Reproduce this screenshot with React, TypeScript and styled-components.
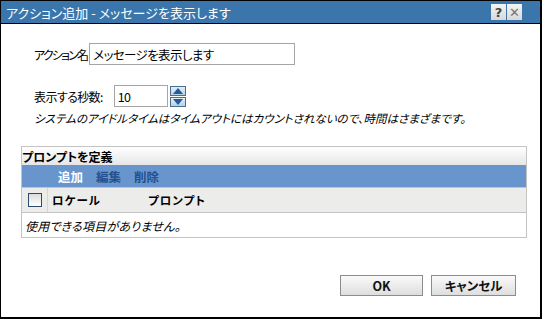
import React from "react";
import styled, {createGlobalStyle} from "styled-components";

const GlobalStyle = createGlobalStyle`
  html, body {
    margin: 0;
    padding: 0;
    background: #ffffff;
  }
  body {
    font-family: "Noto Sans CJK JP", "DejaVu Sans", sans-serif;
    font-size: 12px;
    font-feature-settings: "palt";
    color: #000;
  }
`;

const Window = styled.div`
  width: 542px;
  height: 319px;
  box-sizing: border-box;
  border: 1px solid #000;
  border-right-width: 2px;
  border-bottom-width: 2px;
  display: flex;
  flex-direction: column;
  background: #fff;
`;

const TitleBar = styled.div`
  height: 22px;
  background: #3a75ab;
  border-bottom: 1px solid #000;
  display: flex;
  align-items: center;
  padding: 0 18px 0 5px;
  color: #fff;
  font-size: 13px;
  letter-spacing: 0px;
`;

const Title = styled.div`
  flex: 1;
`;

const TitleButton = styled.div<{dim?: boolean}>`
  width: 15px;
  height: 16px;
  margin-left: 1px;
  background: linear-gradient(#f4f4f4, #d8d8d8);
  color: ${(p) => (p.dim ? "#777" : "#444")};
  display: flex;
  align-items: center;
  justify-content: center;
  font-family: "DejaVu Sans", sans-serif;
  font-weight: bold;
  font-size: 13px;
`;

const Body = styled.div`
  flex: 1;
  display: flex;
  flex-direction: column;
  padding: 19px 15px 0 19px;
`;

const Row = styled.div<{top?: number}>`
  display: flex;
  align-items: center;
  margin-top: ${(p) => p.top ?? 0}px;
  padding-left: 14px;
`;

const Label = styled.span<{gap?: number; spacing?: number}>`
  margin-right: ${(p) => p.gap ?? 2}px;
  letter-spacing: ${(p) => p.spacing ?? 0}px;
`;

const TextInput = styled.div<{w: number}>`
  width: ${(p) => p.w}px;
  height: 22px;
  box-sizing: border-box;
  border: 1px solid #a5a5a5;
  display: flex;
  align-items: center;
  padding-left: 3px;
  font-size: 12.5px;
  letter-spacing: -0.6px;
`;

const Spinner = styled.div`
  display: flex;
  flex-direction: column;
  gap: 1px;
  margin-left: 2px;
`;

const SpinButton = styled.div`
  width: 16px;
  height: 10px;
  box-sizing: border-box;
  border: 1px solid #4a6f8e;
  background: linear-gradient(#e4eef6, #b9cfe2);
  display: flex;
  align-items: center;
  justify-content: center;
`;

const Note = styled.div`
  margin-top: 3px;
  padding-left: 14px;
  font-style: italic;
  font-size: 11.5px;
`;

const Table = styled.div`
  margin-top: 20px;
  margin-left: 1px;
  width: 504px;
  border: 1px solid #c4c4c4;
  display: flex;
  flex-direction: column;
`;

const TableTitle = styled.div`
  height: 18px;
  background: linear-gradient(#ffffff, #e6e6e6);
  display: flex;
  align-items: center;
  font-weight: bold;
  font-size: 12px;
`;

const Toolbar = styled.div`
  height: 22px;
  background: #6995cd;
  border-bottom: 1px solid #c4c4c4;
  display: flex;
  align-items: center;
  gap: 13px;
  padding-left: 36px;
`;

const ToolLink = styled.span<{active?: boolean}>`
  font-weight: bold;
  font-size: 12.5px;
  color: ${(p) => (p.active ? "#ffffff" : "#24508f")};
`;

const HeaderRow = styled.div`
  height: 24px;
  background: #ececea;
  border-bottom: 1px solid #c4c4c4;
  display: flex;
  align-items: stretch;
`;

const CheckCell = styled.div`
  width: 25px;
  border-right: 1px solid #d6d6d6;
  display: flex;
  align-items: center;
  justify-content: center;
`;

const CheckBox = styled.div`
  width: 12px;
  height: 12px;
  border: 1px solid #2c4a6c;
  background: linear-gradient(#dcdcdc, #ffffff);
`;

const HeadCell = styled.div<{w?: number}>`
  width: ${(p) => (p.w ? `${p.w}px` : "auto")};
  display: flex;
  align-items: center;
  padding-left: 4px;
  font-weight: bold;
  font-size: 11.5px;
  letter-spacing: 1px;
`;

const EmptyRow = styled.div`
  height: 24px;
  display: flex;
  align-items: center;
  padding-left: 3px;
  font-style: italic;
  font-size: 12px;
  letter-spacing: 0.2px;
`;

const Footer = styled.div`
  margin-top: 37px;
  display: flex;
  justify-content: flex-end;
  gap: 8px;
  padding-right: 9px;
`;

const Button = styled.div<{w: number}>`
  width: ${(p) => p.w}px;
  height: 21px;
  box-sizing: border-box;
  border: 1px solid #8c8c8c;
  background: linear-gradient(#fafafa, #dedede);
  display: flex;
  align-items: center;
  justify-content: center;
  font-weight: bold;
  font-size: 12.5px;
  color: #111;
`;

const Arrow = ({up}: {up: boolean}) => (
    <svg width="10" height="6" viewBox="0 0 10 6">
        <polygon points={up ? "5,0 10,6 0,6" : "0,0 10,0 5,6"} fill="#1f5c99"/>
    </svg>
);

const App = () => {
    return (
        <>
            <GlobalStyle/>
            <Window>
                <TitleBar>
                    <Title>アクション追加 - メッセージを表示します</Title>
                    <TitleButton>?</TitleButton>
                    <TitleButton dim>✕</TitleButton>
                </TitleBar>
                <Body>
                    <Row>
                        <Label spacing={-1.8}>アクション名</Label>
                        <TextInput w={206}>メッセージを表示します</TextInput>
                    </Row>
                    <Row top={20}>
                        <Label gap={11} spacing={-0.6}>表示する秒数:</Label>
                        <TextInput w={54}>10</TextInput>
                        <Spinner>
                            <SpinButton><Arrow up/></SpinButton>
                            <SpinButton><Arrow up={false}/></SpinButton>
                        </Spinner>
                    </Row>
                    <Note>システムのアイドルタイムはタイムアウトにはカウントされないので、時間はさまざまです。</Note>
                    <Table>
                        <TableTitle>プロンプトを定義</TableTitle>
                        <Toolbar>
                            <ToolLink active>追加</ToolLink>
                            <ToolLink>編集</ToolLink>
                            <ToolLink>削除</ToolLink>
                        </Toolbar>
                        <HeaderRow>
                            <CheckCell><CheckBox/></CheckCell>
                            <HeadCell w={92}>ロケール</HeadCell>
                            <HeadCell>プロンプト</HeadCell>
                        </HeaderRow>
                        <EmptyRow>使用できる項目がありません。</EmptyRow>
                    </Table>
                    <Footer>
                        <Button w={83}>OK</Button>
                        <Button w={85}>キャンセル</Button>
                    </Footer>
                </Body>
            </Window>
        </>
    );
};

export default App;
